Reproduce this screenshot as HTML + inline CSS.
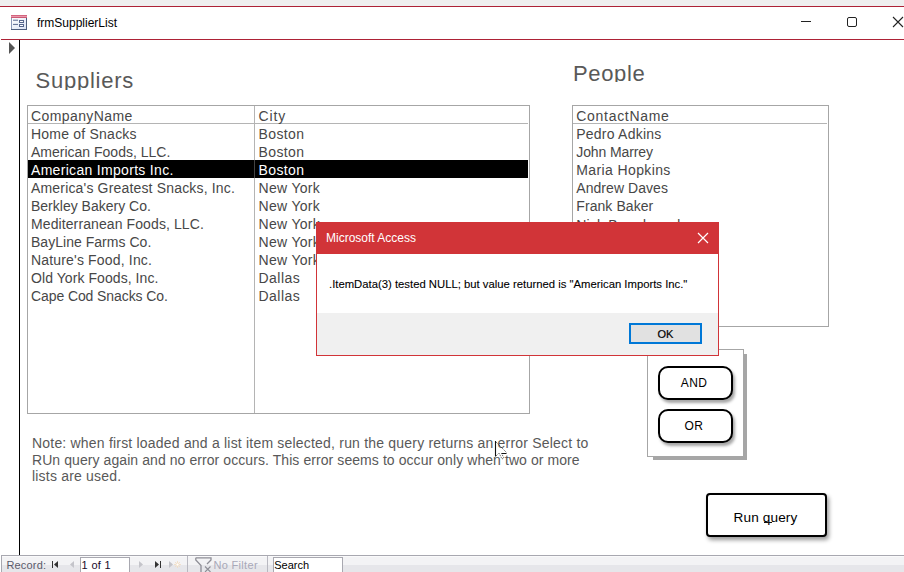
<!DOCTYPE html>
<html><head><meta charset="utf-8">
<style>
*{margin:0;padding:0;box-sizing:border-box}
html,body{width:904px;height:572px;overflow:hidden;background:#fff;font-family:"Liberation Sans",sans-serif;position:relative}
.a{position:absolute}
.t{position:absolute;white-space:pre;line-height:18px}
.l{font-size:14px;color:#474747}
</style></head><body>
<div class="a" style="left:0;top:0;width:904px;height:6px;background:#efefef"></div>
<div class="a" style="left:0;top:6px;width:904px;height:1px;background:#ad2236"></div>
<div class="a" style="left:1px;top:39px;width:903px;height:1px;background:#ad2236"></div>
<svg class="a" style="left:11px;top:15px" width="16" height="15" viewBox="0 0 16 15">
  <defs><linearGradient id="ig" x1="0" y1="0" x2="1" y2="1"><stop offset="0" stop-color="#ffffff"/><stop offset="1" stop-color="#d8e0f2"/></linearGradient>
  <linearGradient id="rg" x1="0" y1="0" x2="0" y2="1"><stop offset="0" stop-color="#c84a6a"/><stop offset="0.5" stop-color="#e898aa"/><stop offset="1" stop-color="#c03a5c"/></linearGradient></defs>
  <rect x="0" y="0" width="16" height="3" fill="url(#rg)"/>
  <rect x="0" y="3" width="16" height="12" fill="url(#ig)"/>
  <rect x="0" y="3" width="1" height="12" fill="#8a98b8"/>
  <rect x="15" y="3" width="1" height="12" fill="#4e5e7e"/>
  <rect x="0" y="14" width="16" height="1" fill="#4e5e7e"/>
  <rect x="2" y="4.7" width="5" height="1" fill="#5a6a90"/>
  <rect x="2" y="8.9" width="5" height="1" fill="#5a6a90"/>
  <rect x="8.5" y="5.5" width="4" height="2" fill="#fff" stroke="#56668c"/>
  <rect x="8.5" y="9.5" width="4" height="2" fill="#fff" stroke="#56668c"/>
</svg>
<div class="t" style="left:37px;top:13.5px;font-size:12px;color:#000">frmSupplierList</div>
<div class="a" style="left:801px;top:21px;width:10px;height:1px;background:#222"></div>
<div class="a" style="left:847px;top:17px;width:10px;height:10px;border:1px solid #222;border-radius:2px"></div>
<svg class="a" style="left:892px;top:16px" width="12" height="12" viewBox="0 0 12 12"><path d="M1 1L11 11M11 1L1 11" stroke="#222" stroke-width="1.1"/></svg>
<svg class="a" style="left:9px;top:42px" width="7" height="12" viewBox="0 0 7 12"><path d="M0 0L6 6L0 12Z" fill="#555"/></svg>
<div class="a" style="left:19px;top:40px;width:1px;height:515px;background:#000"></div>

<div class="a" style="left:35.5px;top:60px;width:120px;height:30px;overflow:hidden"><div class="t" style="left:0;top:8px;font-size:22px;line-height:26px;letter-spacing:0.76px;color:#595959">Suppliers</div></div>
<div class="a" style="left:573px;top:55px;width:100px;height:27px;overflow:hidden"><div class="t" style="left:0;top:6px;font-size:22px;line-height:26px;letter-spacing:0.66px;color:#595959">People</div></div>

<div class="a" style="left:27px;top:105px;width:503px;height:309px;border:1px solid #a6a6a6"></div>
<div class="a" style="left:28px;top:123px;width:500px;height:1px;background:#b4b4b4"></div>
<div class="a" style="left:28px;top:160px;width:500px;height:18px;background:#000"></div>
<div class="a" style="left:254px;top:106px;width:1px;height:307px;background:#b4b4b4"></div>
<div class="a" style="left:254px;top:160px;width:1px;height:18px;background:#444"></div>
<div class="t l" style="left:31px;top:107px;letter-spacing:0.4px">CompanyName</div><div class="t l" style="left:258.5px;top:107px;letter-spacing:0.9px">City</div><div class="t l" style="left:31px;top:125px;letter-spacing:0.22px">Home of Snacks</div><div class="t l" style="left:258.5px;top:125px;letter-spacing:0.4px">Boston</div><div class="t l" style="left:31px;top:143px;letter-spacing:0.0px">American Foods, LLC.</div><div class="t l" style="left:258.5px;top:143px;letter-spacing:0.4px">Boston</div><div class="t l" style="left:31px;top:161px;letter-spacing:0.31px;color:#fff">American Imports Inc.</div><div class="t l" style="left:258.5px;top:161px;letter-spacing:0.4px;color:#fff">Boston</div><div class="t l" style="left:31px;top:179px;letter-spacing:0.17px">America's Greatest Snacks, Inc.</div><div class="t l" style="left:258.5px;top:179px;letter-spacing:0.31px">New York</div><div class="t l" style="left:31px;top:197px;letter-spacing:0.0px">Berkley Bakery Co.</div><div class="t l" style="left:258.5px;top:197px;letter-spacing:0.31px">New York</div><div class="t l" style="left:31px;top:215px;letter-spacing:0.1px">Mediterranean Foods, LLC.</div><div class="t l" style="left:258.5px;top:215px;letter-spacing:0.31px">New York</div><div class="t l" style="left:31px;top:233px;letter-spacing:0.03px">BayLine Farms Co.</div><div class="t l" style="left:258.5px;top:233px;letter-spacing:0.31px">New York</div><div class="t l" style="left:31px;top:251px;letter-spacing:0.17px">Nature's Food, Inc.</div><div class="t l" style="left:258.5px;top:251px;letter-spacing:0.31px">New York</div><div class="t l" style="left:31px;top:269px;letter-spacing:0.07px">Old York Foods, Inc.</div><div class="t l" style="left:258.5px;top:269px;letter-spacing:0.46px">Dallas</div><div class="t l" style="left:31px;top:287px;letter-spacing:-0.09px">Cape Cod Snacks Co.</div><div class="t l" style="left:258.5px;top:287px;letter-spacing:0.46px">Dallas</div>
<div class="a" style="left:572px;top:105px;width:257px;height:222px;border:1px solid #a6a6a6"></div>
<div class="a" style="left:573px;top:123px;width:254px;height:1px;background:#b4b4b4"></div>
<div class="t l" style="left:576.3px;top:107px;letter-spacing:0.7px">ContactName</div><div class="t l" style="left:576.3px;top:125px;letter-spacing:0.22px">Pedro Adkins</div><div class="t l" style="left:576.3px;top:143px;letter-spacing:-0.12px">John Marrey</div><div class="t l" style="left:576.3px;top:161px;letter-spacing:0.38px">Maria Hopkins</div><div class="t l" style="left:576.3px;top:179px;letter-spacing:0.05px">Andrew Daves</div><div class="t l" style="left:576.3px;top:197px;letter-spacing:0.07px">Frank Baker</div><div class="t l" style="left:576.3px;top:216px;letter-spacing:0.15px">Nick Broadwood</div>
<div class="t" style="left:32px;top:434px;font-size:14px;letter-spacing:0.2px;color:#595959">Note: when first loaded and a list item selected, run the query returns an error Select to</div>
<div class="t" style="left:32px;top:451px;font-size:14px;letter-spacing:0.076px;color:#595959">RUn query again and no error occurs. This error seems to occur only when two or more</div>
<div class="t" style="left:32px;top:467px;font-size:14px;letter-spacing:0.2px;color:#595959">lists are used.</div>

<div class="a" style="left:653px;top:354px;width:94px;height:106px;background:#a6a6a6"></div>
<div class="a" style="left:647px;top:349px;width:97px;height:108px;border:1px solid #a6a6a6;background:#fff"></div>
<div class="a" style="left:658px;top:366px;width:75px;height:34px;border:2px solid #000;border-radius:10px;background:#fff;box-shadow:2px 3px 3px rgba(0,0,0,0.35)"></div>
<div class="t" style="left:656px;top:374px;width:76px;text-align:center;font-size:12px;letter-spacing:0.35px;color:#000">AND</div>
<div class="a" style="left:658px;top:409px;width:75px;height:34px;border:2px solid #000;border-radius:10px;background:#fff;box-shadow:2px 3px 3px rgba(0,0,0,0.35)"></div>
<div class="t" style="left:656px;top:417px;width:76px;text-align:center;font-size:12px;letter-spacing:0.6px;color:#000">OR</div>

<div class="a" style="left:706px;top:493px;width:121px;height:44px;border:2px solid #000;border-radius:4px;background:#fff;box-shadow:2px 3px 4px rgba(0,0,0,0.4)"></div>
<div class="t" style="left:705px;top:509px;width:121px;text-align:center;font-size:13.6px;letter-spacing:0.12px;color:#000">Run query</div>

<div class="a" style="left:316px;top:222px;width:403px;height:134px;border:1px solid #d13438;background:#fff"></div>
<div class="a" style="left:316px;top:222px;width:403px;height:32px;background:#d13438"></div>
<div class="a" style="left:317px;top:313px;width:401px;height:42px;background:#f0f0f0"></div>
<div class="t" style="left:326px;top:229px;font-size:12px;color:#fff">Microsoft Access</div>
<svg class="a" style="left:697px;top:232px" width="12" height="12" viewBox="0 0 12 12"><path d="M1 1L11 11M11 1L1 11" stroke="#fff" stroke-width="1.2"/></svg>
<div class="t" style="left:329px;top:275px;font-size:11.3px;color:#000;-webkit-text-stroke:0.1px #000">.ItemData(3) tested NULL; but value returned is "American Imports Inc."</div>
<div class="a" style="left:629px;top:323px;width:73px;height:21px;border:2px solid #0078d7;background:#e1e1e1"></div>
<div class="t" style="left:629px;top:325px;width:73px;text-align:center;font-size:11px;color:#000;-webkit-text-stroke:0.2px #000">OK</div>

<div class="a" style="left:764px;top:522px;width:8px;height:1px;background:#111"></div>
<svg class="a" style="left:490px;top:438px" width="20" height="24" viewBox="0 0 20 24"><path d="M5.5 3V18.5M11.5 15.5H16.5" stroke="#111" stroke-width="1.1" fill="none"/><path d="M6 4L16.5 14.5M6 18L9 15L12 21L14 20L11.5 15.5" stroke="#222" stroke-width="0.9" fill="none" stroke-dasharray="1.3 0.9" opacity="0.75"/></svg>

<div class="a" style="left:1px;top:555px;width:903px;height:1px;background:#a8a8b0"></div>
<div class="a" style="left:1px;top:556px;width:903px;height:9px;background:#f3f3f5"></div>
<div class="a" style="left:1px;top:565px;width:903px;height:7px;background:#e6e6ea"></div>
<div class="a" style="left:2px;top:556px;width:902px;height:1px;background:#fafafb"></div>
<div class="a" style="left:1px;top:555px;width:1px;height:17px;background:#a8a8b0"></div>
<div class="t" style="left:6.4px;top:557.5px;font-size:11px;line-height:14px;letter-spacing:0.18px;color:#5a5a6a">Record:</div>
<svg class="a" style="left:52px;top:561px" width="7" height="7" viewBox="0 0 7 7"><rect x="0" y="0" width="1" height="7" fill="#333"/><path d="M6 0V7L2 3.5Z" fill="#333"/></svg>
<svg class="a" style="left:70px;top:561px" width="5" height="7" viewBox="0 0 5 7"><path d="M4 0V7L0 3.5Z" fill="#c4c4ca"/></svg>
<div class="a" style="left:80px;top:557px;width:50px;height:16px;border:1px solid #a8a8b0;border-bottom:none;background:#fff"></div>
<div class="t" style="left:81.6px;top:557.5px;font-size:11px;line-height:14px;letter-spacing:0.32px;color:#1a0a2a">1 of 1</div>
<svg class="a" style="left:139px;top:561px" width="5" height="7" viewBox="0 0 5 7"><path d="M0 0V7L4 3.5Z" fill="#c4c4ca"/></svg>
<svg class="a" style="left:155px;top:561px" width="7" height="7" viewBox="0 0 7 7"><path d="M0 0V7L4 3.5Z" fill="#333"/><rect x="5" y="0" width="1" height="7" fill="#333"/></svg>
<svg class="a" style="left:169px;top:561px" width="13" height="7" viewBox="0 0 13 7"><path d="M0 0V7L4 3.5Z" fill="#c4c4ca"/><g stroke="#f2dcc0" stroke-width="0.8" fill="none"><path d="M8.5 0V7M5 3.5H12M6 1L11 6M11 1L6 6"/><circle cx="8.5" cy="3.5" r="1.5" fill="#fff"/></g></svg>
<div class="a" style="left:187px;top:556px;width:1px;height:16px;background:#b8b8c0"></div>
<svg class="a" style="left:195px;top:557px" width="17" height="15" viewBox="0 0 17 15"><path d="M0.8 0.8H16V3L12 7M0.8 0.8V3L6 8.5V15" fill="none" stroke="#8e8e96" stroke-width="1.3"/><path d="M10 9.5L15.5 15M15.5 9.5L10 15" stroke="#8e8e96" stroke-width="1.1"/></svg>
<div class="t" style="left:213.5px;top:557.5px;font-size:11px;line-height:14px;letter-spacing:0.31px;color:#a8a8b8">No Filter</div>
<div class="a" style="left:267px;top:556px;width:1px;height:16px;background:#b8b8c0"></div>
<div class="a" style="left:273px;top:557px;width:70px;height:16px;border:1px solid #a8a8b0;border-bottom:none;background:#fff"></div>
<div class="t" style="left:274.2px;top:557.5px;font-size:11px;line-height:14px;color:#000">Search</div>
</body></html>
